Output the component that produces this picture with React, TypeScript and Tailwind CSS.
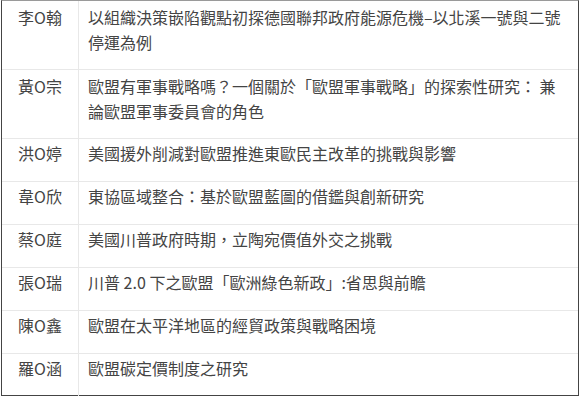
const rows: [string, string[]][] = [
  ["李O翰", ["以組織決策嵌陷觀點初探德國聯邦政府能源危機–以北溪一號與二號", "停運為例"]],
  ["黃O宗", ["歐盟有軍事戰略嗎？一個關於「歐盟軍事戰略」的探索性研究： 兼", "論歐盟軍事委員會的角色"]],
  ["洪O婷", ["美國援外削減對歐盟推進東歐民主改革的挑戰與影響"]],
  ["韋O欣", ["東協區域整合：基於歐盟藍圖的借鑑與創新研究"]],
  ["蔡O庭", ["美國川普政府時期，立陶宛價值外交之挑戰"]],
  ["張O瑞", ["川普 2.0 下之歐盟「歐洲綠色新政」:省思與前瞻"]],
  ["陳O鑫", ["歐盟在太平洋地區的經貿政策與戰略困境"]],
  ["羅O涵", ["歐盟碳定價制度之研究"]],
];

export default function App() {
  return (
    <div className="w-[580px] h-[397px] bg-white">
      <div
        className="ml-[1px] w-[578px] h-[396px] border border-[#444] border-t-[#9a9a9a] text-[16px] leading-[25px] text-[#444]"
        style={{ fontFamily: '"Noto Sans CJK TC", "Noto Sans", sans-serif' }}
      >
        {rows.map(([name, lines], i) => {
          const pad = lines.length > 1 ? "pt-[4px] pb-[14px]" : "pt-[2px] pb-[15px]";
          return (
            <div
              key={name}
              className={`flex ${i > 0 ? "border-t border-[#e8e8e8]" : ""}`}
            >
              <div className={`w-[77px] shrink-0 border-r border-[#e8e8e8] text-center ${pad}`}>
                {name}
              </div>
              <div className={`flex-1 pl-[9px] whitespace-nowrap ${pad}`}>
                {lines.map((l) => (
                  <div key={l}>{l}</div>
                ))}
              </div>
            </div>
          );
        })}
      </div>
    </div>
  );
}
